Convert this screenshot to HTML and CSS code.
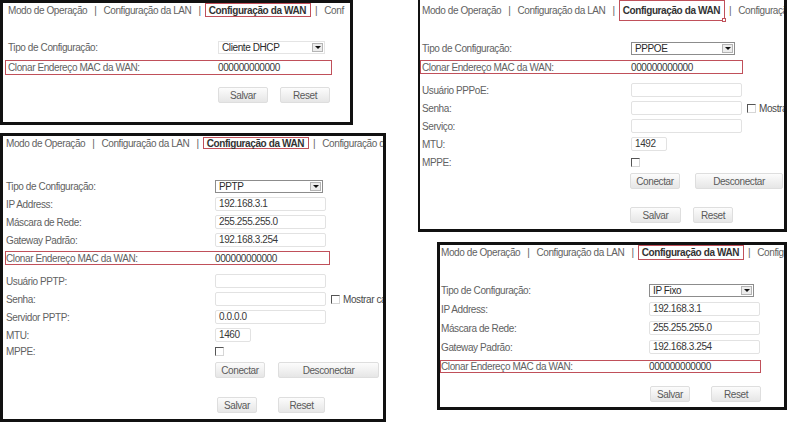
FILE: index.html
```html
<!DOCTYPE html>
<html lang="pt-BR">
<head>
    <meta charset="UTF-8">
    <title>Configuração da WAN</title>
    <link rel="stylesheet" href="styles.css">
</head>
<body>
    <div class="desk">
        <div class="col col-left">
            <!-- Cliente DHCP -->
            <section class="shot p1">
                <div class="tabs">
                    <span>Modo de Operação</span><i class="sep">|</i><span>Configuração da LAN</span><i class="sep">|</i><span class="active">Configuração da WAN</span><i class="sep">|</i><span>Conf</span>
                </div>
                <div class="form">
                    <div class="row"><span class="lbl">Tipo de Configuração:</span><span class="field"><span class="select">Cliente DHCP<b class="arrow"></b></span></span></div>
                    <div class="row clone"><span class="lbl">Clonar Endereço MAC da WAN:</span><span class="val">000000000000</span></div>
                    <div class="row btns final"><span></span><span class="field"><button class="btn salvar">Salvar</button><button class="btn reset">Reset</button></span></div>
                </div>
            </section>

            <!-- PPTP -->
            <section class="shot p3">
                <div class="tabs">
                    <span>Modo de Operação</span><i class="sep">|</i><span>Configuração da LAN</span><i class="sep">|</i><span class="active">Configuração da WAN</span><i class="sep">|</i><span>Configuração d</span>
                </div>
                <div class="form">
                    <div class="row"><span class="lbl">Tipo de Configuração:</span><span class="field"><span class="select">PPTP<b class="arrow"></b></span></span></div>
                    <div class="row"><span class="lbl">IP Address:</span><span class="field"><span class="input">192.168.3.1</span></span></div>
                    <div class="row"><span class="lbl">Máscara de Rede:</span><span class="field"><span class="input">255.255.255.0</span></span></div>
                    <div class="row"><span class="lbl">Gateway Padrão:</span><span class="field"><span class="input">192.168.3.254</span></span></div>
                    <div class="row clone"><span class="lbl">Clonar Endereço MAC da WAN:</span><span class="val">000000000000</span></div>
                    <div class="row after-clone"><span class="lbl">Usuário PPTP:</span><span class="field"><span class="input"></span></span></div>
                    <div class="row"><span class="lbl">Senha:</span><span class="field"><span class="input"></span><span class="check"></span><span class="show">Mostrar ca</span></span></div>
                    <div class="row"><span class="lbl">Servidor PPTP:</span><span class="field"><span class="input">0.0.0.0</span></span></div>
                    <div class="row"><span class="lbl">MTU:</span><span class="field"><span class="input short">1460</span></span></div>
                    <div class="row short"><span class="lbl">MPPE:</span><span class="field"><span class="check"></span></span></div>
                    <div class="row btns"><span></span><span class="field"><button class="btn conectar">Conectar</button><button class="btn desconectar">Desconectar</button></span></div>
                    <div class="row btns final"><span></span><span class="field"><button class="btn salvar">Salvar</button><button class="btn reset">Reset</button></span></div>
                </div>
            </section>
        </div>

        <div class="col col-right">
            <!-- PPPOE -->
            <section class="shot p2">
                <div class="tabs">
                    <span>Modo de Operação</span><i class="sep">|</i><span>Configuração da LAN</span><i class="sep">|</i><span class="active">Configuração da WAN</span><i class="sep">|</i><span>Configuraçã</span>
                </div>
                <div class="form">
                    <div class="row"><span class="lbl">Tipo de Configuração:</span><span class="field"><span class="select">PPPOE<b class="arrow"></b></span></span></div>
                    <div class="row clone"><span class="lbl">Clonar Endereço MAC da WAN:</span><span class="val">000000000000</span></div>
                    <div class="row after-clone"><span class="lbl">Usuário PPPoE:</span><span class="field"><span class="input"></span></span></div>
                    <div class="row"><span class="lbl">Senha:</span><span class="field"><span class="input"></span><span class="check"></span><span class="show">Mostrar</span></span></div>
                    <div class="row"><span class="lbl">Serviço:</span><span class="field"><span class="input"></span></span></div>
                    <div class="row"><span class="lbl">MTU:</span><span class="field"><span class="input short">1492</span></span></div>
                    <div class="row"><span class="lbl">MPPE:</span><span class="field"><span class="check"></span></span></div>
                    <div class="row btns"><span></span><span class="field"><button class="btn conectar">Conectar</button><button class="btn desconectar">Desconectar</button></span></div>
                    <div class="row btns final"><span></span><span class="field"><button class="btn salvar">Salvar</button><button class="btn reset">Reset</button></span></div>
                </div>
            </section>

            <!-- IP Fixo -->
            <section class="shot p4">
                <div class="tabs">
                    <span>Modo de Operação</span><i class="sep">|</i><span>Configuração da LAN</span><i class="sep">|</i><span class="active">Configuração da WAN</span><i class="sep">|</i><span>Configura</span>
                </div>
                <div class="form">
                    <div class="row"><span class="lbl">Tipo de Configuração:</span><span class="field"><span class="select">IP Fixo<b class="arrow"></b></span></span></div>
                    <div class="row"><span class="lbl">IP Address:</span><span class="field"><span class="input">192.168.3.1</span></span></div>
                    <div class="row"><span class="lbl">Máscara de Rede:</span><span class="field"><span class="input">255.255.255.0</span></span></div>
                    <div class="row"><span class="lbl">Gateway Padrão:</span><span class="field"><span class="input">192.168.3.254</span></span></div>
                    <div class="row clone"><span class="lbl">Clonar Endereço MAC da WAN:</span><span class="val">000000000000</span></div>
                    <div class="row btns final"><span></span><span class="field"><button class="btn salvar">Salvar</button><button class="btn reset">Reset</button></span></div>
                </div>
            </section>
        </div>
    </div>
</body>
</html>
```

FILE: styles.css
```css
html, body {
    margin: 0;
    background: #fff;
}
body {
    width: 800px;
    height: 428px;
    overflow: hidden;
    font-family: "Liberation Sans", Arial, sans-serif;
}
.desk {
    display: flex;
}
.col {
    display: flex;
    flex-direction: column;
}
.col-left {
    width: 418px;
    gap: 8px;
}
.col-right {
    width: 382px;
}

/* une capture d'écran */
.shot {
    box-sizing: border-box;
    border: 3px solid #111;
    background: #fff;
    overflow: hidden;
    white-space: nowrap;
    font-size: 10px;
    letter-spacing: -0.4px;
    color: #626262;
    padding-left: var(--pad);
}
.p1 {
    width: 353px;
    height: 125px;
    --pad: 5px;
    --lbl: 210px;
    --tabs-h: 14px;
    --act-h: 14px;
    --form-mt: 21px;
    --clone-x: -3px;
    --clone-pad: 2px;
    --clone-w: 327px;
    --clone-h: 15px;
    --clone-mt: 4px;
    --final-mt: 12px;
    --sel-w: 107px;
}
.p2 {
    width: 369px;
    height: 232px;
    border-top: 0;
    border-left-width: 2px;
    --pad: 2px;
    --lbl: 209px;
    --tabs-h: 21px;
    --act-h: 21px;
    --form-mt: 18px;
    --clone-x: -2px;
    --clone-pad: 1px;
    --clone-w: 323px;
    --clone-h: 14px;
    --clone-mt: 3px;
    --after-clone: 7px;
    --btn-mt: 2px;
    --final-mt: 18px;
    --sel-w: 104px;
}
.p3 {
    width: 386px;
    height: 289px;
    --pad: 3px;
    --lbl: 209px;
    --tabs-h: 14px;
    --act-h: 12px;
    --form-mt: 27px;
    --clone-x: -1px;
    --clone-pad: 0px;
    --clone-w: 325px;
    --clone-h: 14px;
    --clone-mt: 2px;
    --after-clone: 7px;
    --btn-mt: 3px;
    --final-mt: 19px;
    --sel-w: 108px;
}
.p4 {
    width: 350px;
    height: 168px;
    margin: 10px 0 0 19px;
    --pad: 1px;
    --lbl: 208px;
    --tabs-h: 15px;
    --act-h: 15px;
    --form-mt: 21px;
    --row-gap: 1px;
    --clone-x: -1px;
    --clone-pad: 0px;
    --clone-w: 321px;
    --clone-h: 13px;
    --clone-mt: 3px;
    --final-mt: 12px;
    --sel-w: 105px;
}

/* onglets */
.tabs {
    display: flex;
    align-items: center;
    height: var(--tabs-h);
}
.tabs .sep {
    font-style: normal;
    padding: 0 7px;
}
.tabs .active {
    position: relative;
    display: flex;
    align-items: center;
    box-sizing: border-box;
    height: var(--act-h);
    padding: 0 4px 0 3px;
    margin: 0 -3px;
    border: 1px solid #c0505a;
    font-weight: bold;
    color: #333;
}
.p2 .tabs .active::after {
    content: "";
    position: absolute;
    right: -2px;
    bottom: -2px;
    width: 2px;
    height: 2px;
    border: 1px solid #c0505a;
    background: #fff;
}

/* formulaire */
.form {
    display: flex;
    flex-direction: column;
    gap: var(--row-gap, 0);
    margin-top: var(--form-mt);
}
.row {
    display: grid;
    grid-template-columns: var(--lbl) 1fr;
    align-items: center;
    height: 18px;
}
.row.short {
    height: 15px;
}
.row.clone {
    box-sizing: border-box;
    width: var(--clone-w);
    height: var(--clone-h);
    margin: var(--clone-mt) 0 0 var(--clone-x);
    padding-left: var(--clone-pad);
    border: 1px solid #c0505a;
}
.row.after-clone {
    margin-top: var(--after-clone);
}
.row.btns {
    height: 16px;
    margin-top: var(--btn-mt);
}
.row.btns.final {
    margin-top: var(--final-mt);
}
.val {
    color: #383838;
}
.field {
    display: flex;
    align-items: center;
}

.select {
    box-sizing: border-box;
    display: flex;
    align-items: center;
    justify-content: space-between;
    width: var(--sel-w);
    height: 13px;
    padding: 0 1px 0 3px;
    border: 1px solid #8c8c8c;
    color: #2a2a2a;
}
.p1 .select {
    border-color: #e4e4e4;
}
.arrow {
    box-sizing: border-box;
    display: flex;
    align-items: center;
    justify-content: center;
    width: 11px;
    height: 9px;
    border: 1px solid #b4b4b4;
    background: #ececec;
}
.arrow::after {
    content: "";
    border-left: 3px solid transparent;
    border-right: 3px solid transparent;
    border-top: 3px solid #111;
}

.input {
    box-sizing: border-box;
    display: block;
    width: 111px;
    height: 14px;
    line-height: 12px;
    padding-left: 3px;
    border: 1px solid #e2e2e2;
    border-radius: 2px;
    color: #383838;
}
.input.short {
    width: 36px;
}
.check {
    box-sizing: border-box;
    width: 9px;
    height: 9px;
    border: 1px solid;
    border-color: #555 #d6d6d6 #d6d6d6 #555;
    background: #fff;
}
.field .input + .check {
    margin-left: 5px;
}
.show {
    margin-left: 3px;
    color: #4a4a4a;
}

/* boutons */
.btn {
    box-sizing: border-box;
    height: 16px;
    padding: 0;
    font: inherit;
    letter-spacing: inherit;
    color: #5a5a5a;
    border: 1px solid #dedede;
    border-radius: 2px;
    background: linear-gradient(#fcfcfc, #e6e6e6);
}
.p1 .salvar { width: 50px; }
.p1 .reset { width: 50px; margin-left: 12px; }
.p2 .conectar { width: 50px; margin-left: -1px; }
.p2 .desconectar { width: 88px; margin-left: 15px; }
.p2 .salvar { width: 51px; margin-left: -1px; }
.p2 .reset { width: 40px; margin-left: 12px; }
.p3 .conectar { width: 50px; }
.p3 .desconectar { width: 101px; margin-left: 13px; }
.p3 .salvar { width: 40px; margin-left: 2px; }
.p3 .reset { width: 47px; margin-left: 21px; }
.p4 .salvar { width: 40px; margin-left: 1px; }
.p4 .reset { width: 50px; margin-left: 21px; }
```
